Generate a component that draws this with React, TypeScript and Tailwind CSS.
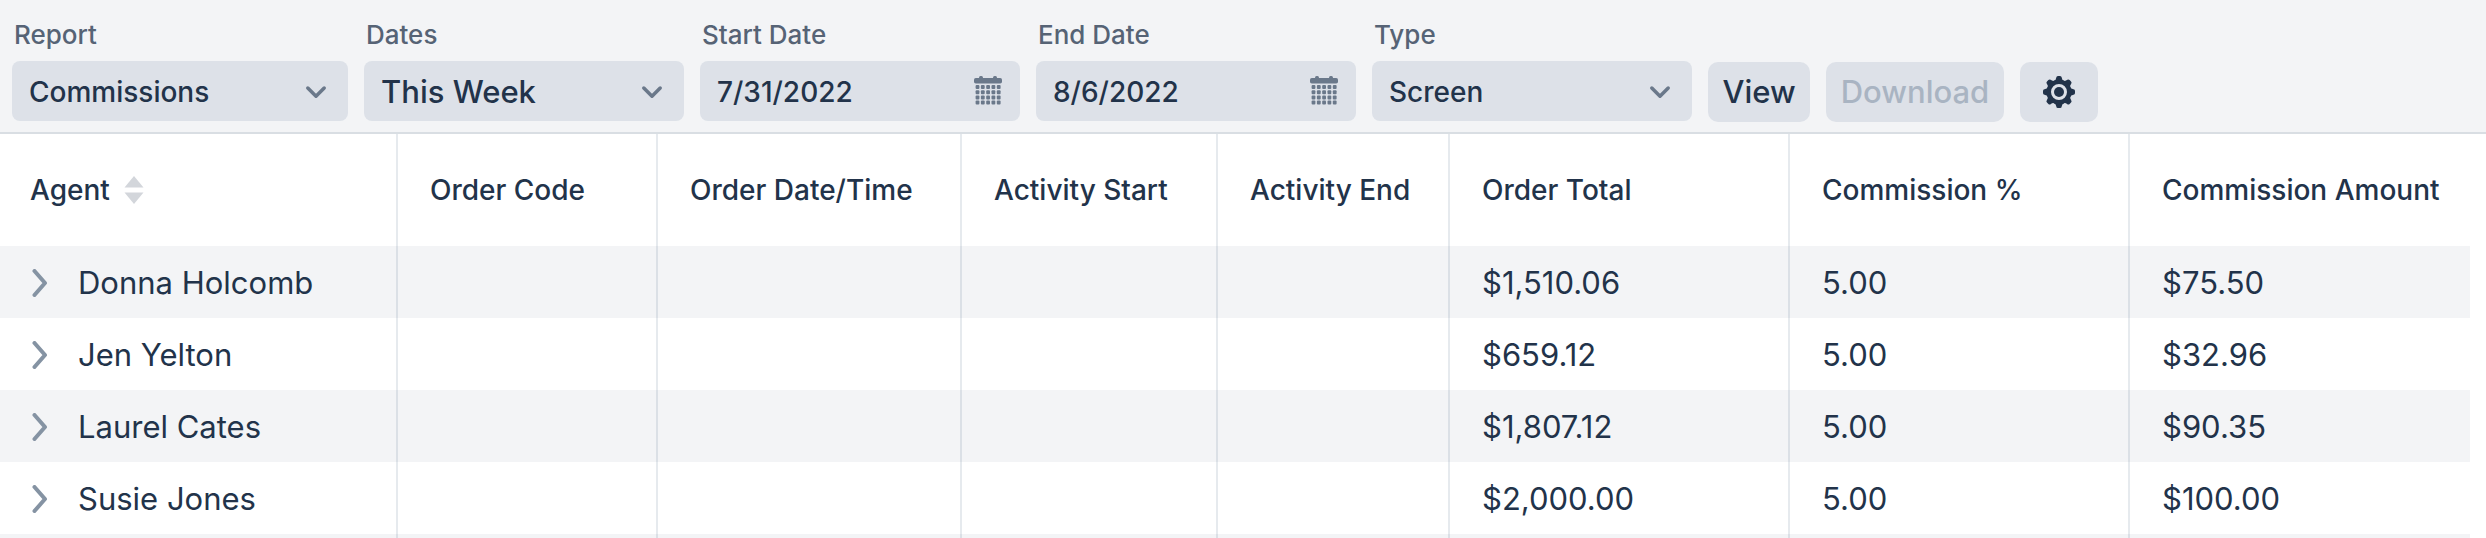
import { useState } from "react";
import type { ReactNode } from "react";
import clsx from "clsx";

const columns = [
  { title: "Agent", width: "w-[398px]" },
  { title: "Order Code", width: "w-[260px]" },
  { title: "Order Date/Time", width: "w-[304px]" },
  { title: "Activity Start", width: "w-[256px]" },
  { title: "Activity End", width: "w-[232px]" },
  { title: "Order Total", width: "w-[340px]" },
  { title: "Commission %", width: "w-[340px]" },
  { title: "Commission Amount", width: "w-auto" },
];

const agents = [
  { name: "Donna Holcomb", total: "$1,510.06", percent: "5.00", amount: "$75.50" },
  { name: "Jen Yelton", total: "$659.12", percent: "5.00", amount: "$32.96" },
  { name: "Laurel Cates", total: "$1,807.12", percent: "5.00", amount: "$90.35" },
  { name: "Susie Jones", total: "$2,000.00", percent: "5.00", amount: "$100.00" },
];

const CalendarIcon = () => (
  <svg viewBox="0 0 28 30" className="w-7 h-[30px]" fill="currentColor" aria-hidden="true">
    <rect x="5" y="0" width="4" height="4" rx="1.5" />
    <rect x="19" y="0" width="4" height="4" rx="1.5" />
    <rect x="0" y="2" width="28" height="5.5" rx="1.8" />
    {[9, 14.2, 19.4, 24.6].map((y) =>
      [1.6, 6.9, 12.2, 17.5, 22.8].map((x) => (
        <rect key={`${x}-${y}`} x={x} y={y} width="3.8" height="4" rx="1" />
      ))
    )}
  </svg>
);

const GearIcon = () => {
  const teeth = [0, 45, 90, 135, 180, 225, 270, 315];
  return (
    <svg viewBox="-16 -16 32 32" className="w-8 h-8" aria-hidden="true">
      <g fill="currentColor">
        {teeth.map((angle) => (
          <path
            key={angle}
            d="M-5 -11 Q-2.9 -12 -2.7 -14.5 Q-2.6 -16 -1 -16 H1 Q2.6 -16 2.7 -14.5 Q2.9 -12 5 -11 Z"
            transform={`rotate(${angle})`}
          />
        ))}
        <circle r="5" />
      </g>
      <circle r="10.2" fill="none" stroke="currentColor" strokeWidth="4.4" />
    </svg>
  );
};

interface FieldProps {
  id: string;
  label: string;
  width: string;
  icon: ReactNode;
  children: ReactNode;
}

const Field = ({ id, label, width, icon, children }: FieldProps) => (
  <div className={clsx("flex flex-col", width)}>
    <label
      htmlFor={id}
      className="h-[61px] pt-[19px] pl-0.5 text-[26px] leading-8 font-medium text-[#566375]"
    >
      {label}
    </label>
    <div className="relative">
      {children}
      <span className="absolute inset-y-0 right-[18px] flex items-center pointer-events-none text-[#6a788a]">
        {icon}
      </span>
    </div>
  </div>
);

const Chevron = () => (
  <svg viewBox="0 0 28 28" className="w-7 h-7" fill="none" aria-hidden="true">
    <path
      d="M5.8 11 L14 19.2 L22.2 11"
      stroke="currentColor"
      strokeWidth="3.5"
      strokeLinecap="round"
      strokeLinejoin="round"
    />
  </svg>
);

const controlClass =
  "block w-full h-[60px] appearance-none rounded-lg bg-[#dde1e8] pt-0.5 pl-[17px] pr-14 font-medium text-[#22334a]";

const SelectField = ({
  id,
  label,
  width,
  size,
  options,
}: {
  id: string;
  label: string;
  width: string;
  size: string;
  options: string[];
}) => (
  <Field id={id} label={label} width={width} icon={<Chevron />}>
    <select id={id} className={clsx(controlClass, size)}>
      {options.map((option) => (
        <option key={option}>{option}</option>
      ))}
    </select>
  </Field>
);

const DateField = ({ id, label, value }: { id: string; label: string; value: string }) => (
  <Field id={id} label={label} width="w-[320px]" icon={<CalendarIcon />}>
    <input id={id} type="text" defaultValue={value} className={clsx(controlClass, "text-[28px]")} />
  </Field>
);

const buttonClass =
  "h-[60px] rounded-[10px] bg-[#dde1e8] text-[31px] leading-10 font-medium flex items-center justify-center";

const Toolbar = () => (
  <header className="flex flex-none items-end gap-4 h-[134px] px-3 pb-2.5 bg-[#f3f4f6] border-b-2 border-[#d9dee3]">
    <div className="flex gap-4 pb-px">
      <SelectField id="report" label="Report" width="w-[336px]" size="text-[28px]" options={["Commissions"]} />
      <SelectField id="dates" label="Dates" width="w-[320px]" size="text-[31px]" options={["This Week"]} />
      <DateField id="start" label="Start Date" value="7/31/2022" />
      <DateField id="end" label="End Date" value="8/6/2022" />
      <SelectField id="type" label="Type" width="w-[320px]" size="text-[28px]" options={["Screen"]} />
    </div>
    <button type="button" className={clsx(buttonClass, "w-[102px] text-[#22334a]")}>
      View
    </button>
    <button type="button" disabled className={clsx(buttonClass, "w-[178px] text-[#a9b4c2]")}>
      Download
    </button>
    <button type="button" aria-label="Settings" className={clsx(buttonClass, "w-[78px] text-[#22334a]")}>
      <GearIcon />
    </button>
  </header>
);

const SortIcon = () => (
  <svg viewBox="0 0 20 28" className="w-5 h-7" fill="#d3d6db" aria-hidden="true">
    <path d="M10 0 L19.5 11.5 H0.5 Z" />
    <path d="M10 28 L19.5 16.5 H0.5 Z" />
  </svg>
);

const cellBorder = "border-r-2 border-[#1f4060]/11";

export default function App() {
  const [selected, setSelected] = useState<string | null>(null);

  return (
    <div className="flex flex-col h-screen overflow-hidden bg-white font-[Inter,sans-serif] text-[#22334a]">
      <Toolbar />
      <main className="flex-1 min-h-0 overflow-hidden mr-4">
        <table className="w-full table-fixed border-separate border-spacing-0 text-left">
          <thead>
            <tr className="h-28">
              {columns.map((column, i) => (
                <th
                  key={column.title}
                  scope="col"
                  className={clsx(
                    column.width,
                    "p-0 text-[28px] leading-9 font-medium whitespace-nowrap",
                    i === 0 ? "pl-[30px]" : "pl-8",
                    i < columns.length - 1 && cellBorder
                  )}
                >
                  {i === 0 ? (
                    <button type="button" className="flex items-center gap-3.5">
                      {column.title}
                      <SortIcon />
                    </button>
                  ) : (
                    column.title
                  )}
                </th>
              ))}
            </tr>
          </thead>
          <tbody className="text-[31px] leading-10">
            {agents.map((agent) => (
              <tr key={agent.name} className="h-[72px] odd:bg-[#f3f4f6]">
                <td className={clsx("p-0 pt-0.5 pl-[30px]", cellBorder)}>
                  <div className="flex items-center gap-7">
                    <button
                      type="button"
                      aria-label={`Expand ${agent.name}`}
                      aria-expanded={selected === agent.name}
                      onClick={() => setSelected(selected === agent.name ? null : agent.name)}
                    >
                      <svg viewBox="0 0 20 28" className="w-5 h-7" fill="none" aria-hidden="true">
                        <path
                          d="M4.5 2 L15 14 L4.5 26"
                          stroke="#8593a3"
                          strokeWidth="4"
                          strokeLinecap="round"
                          strokeLinejoin="round"
                        />
                      </svg>
                    </button>
                    {agent.name}
                  </div>
                </td>
                <td className={cellBorder} />
                <td className={cellBorder} />
                <td className={cellBorder} />
                <td className={cellBorder} />
                <td className={clsx("p-0 pt-0.5 pl-8", cellBorder)}>{agent.total}</td>
                <td className={clsx("p-0 pt-0.5 pl-8", cellBorder)}>{agent.percent}</td>
                <td className="p-0 pt-0.5 pl-8">{agent.amount}</td>
              </tr>
            ))}
            <tr className="h-[72px] bg-[#f3f4f6]">
              {columns.map((column, i) => (
                <td key={column.title} className={clsx(i < columns.length - 1 && cellBorder)} />
              ))}
            </tr>
          </tbody>
        </table>
      </main>
    </div>
  );
}
